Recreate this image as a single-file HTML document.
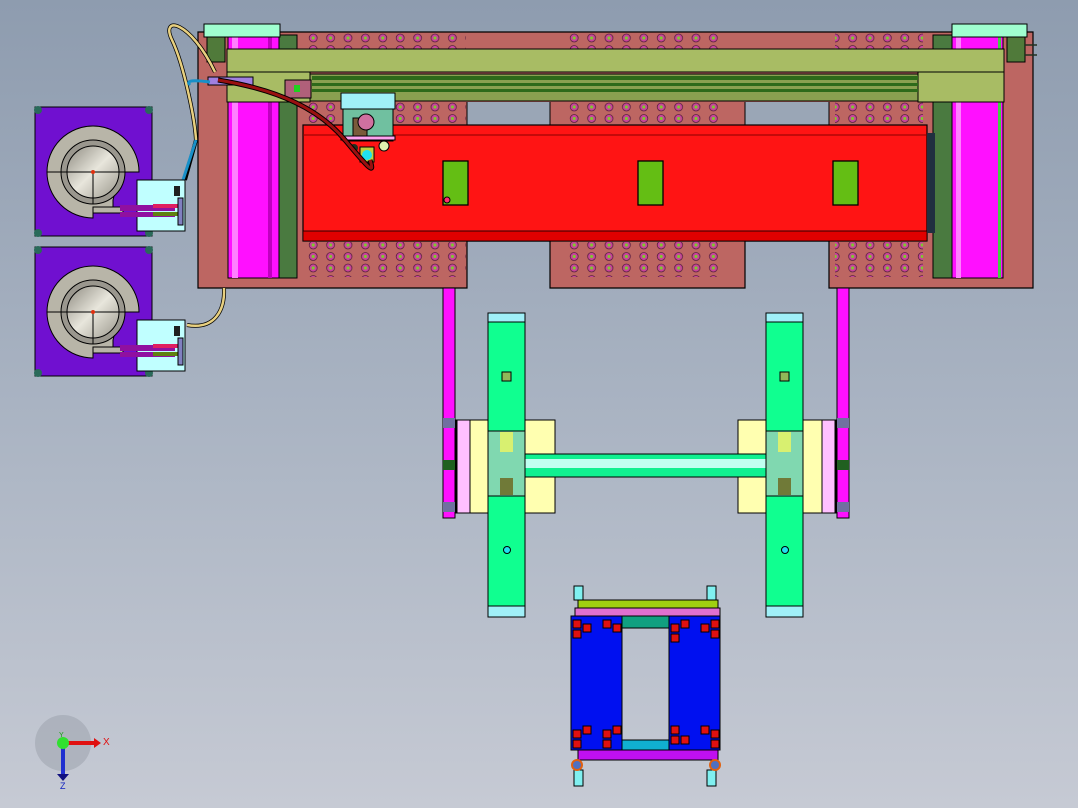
<!DOCTYPE html>
<html><head><meta charset="utf-8"><style>
html,body{margin:0;padding:0;width:1078px;height:808px;overflow:hidden}
body{background:linear-gradient(#8e9caf,#a9b3c2 50%,#c6cad4)}
svg{position:absolute;left:0;top:0}
</style></head><body>
<svg width="1078" height="808" viewBox="0 0 1078 808" xmlns="http://www.w3.org/2000/svg" font-family="Liberation Sans, sans-serif">
<defs>
<pattern id="h" x="304.5" y="32" width="17.4" height="11.5" patternUnits="userSpaceOnUse">
<circle cx="8.7" cy="6" r="4" fill="#c8449a" stroke="#5a2040" stroke-width="0.8"/>
<circle cx="8.7" cy="6" r="1.6" fill="#7fc830"/>
</pattern>
<linearGradient id="disc" x1="0" y1="0" x2="1" y2="1"><stop offset="0" stop-color="#8d8a80"/><stop offset=".5" stop-color="#e8e6dc"/><stop offset="1" stop-color="#9a978c"/></linearGradient>
</defs>

<path d="M198 32H1033V288H829V241H745V288H550V241H467V288H198Z" fill="#bd6662" stroke="#000" stroke-width="1.2"/>
<rect x="467" y="102" width="83" height="23" fill="#9aa6b6"/>
<rect x="745" y="102" width="84" height="23" fill="#9aa6b6"/>
<line x1="467" y1="102" x2="467" y2="125" stroke="#000"/><line x1="550" y1="102" x2="550" y2="125" stroke="#000"/>
<line x1="745" y1="102" x2="745" y2="125" stroke="#000"/><line x1="829" y1="102" x2="829" y2="125" stroke="#000"/>
<rect x="304" y="32" width="162" height="24" fill="url(#h)"/>
<rect x="565" y="32" width="158" height="24" fill="url(#h)"/>
<rect x="835" y="32" width="88" height="24" fill="url(#h)"/>
<rect x="304" y="100" width="162" height="25" fill="url(#h)"/>
<rect x="565" y="100" width="158" height="25" fill="url(#h)"/>
<rect x="835" y="100" width="88" height="25" fill="url(#h)"/>
<rect x="304" y="242" width="162" height="35" fill="url(#h)"/>
<rect x="565" y="242" width="158" height="35" fill="url(#h)"/>
<rect x="835" y="242" width="88" height="35" fill="url(#h)"/>

<rect x="279" y="35" width="18" height="243" fill="#4a7a40" stroke="#000"/>
<rect x="228" y="35" width="51" height="243" fill="#ff10ff" stroke="#000"/>
<rect x="232" y="35" width="6" height="243" fill="#ff80ff"/>
<rect x="268" y="35" width="4" height="243" fill="#c000c0"/>
<rect x="204" y="24" width="76" height="13" fill="#a0ffd0" stroke="#000"/>
<rect x="207" y="37" width="18" height="25" fill="#507a3a" stroke="#000"/>
<rect x="933" y="35" width="19" height="243" fill="#4a7a40" stroke="#000"/>
<rect x="952" y="35" width="51" height="243" fill="#ff10ff" stroke="#000"/>
<rect x="956" y="35" width="5" height="243" fill="#ff80ff"/>
<rect x="998" y="35" width="3" height="243" fill="#40d040"/>
<rect x="952" y="24" width="75" height="13" fill="#a0ffd0" stroke="#000"/>
<rect x="1007" y="37" width="18" height="25" fill="#507a3a" stroke="#000"/>
<path d="M1025 45h12M1025 55h12" stroke="#203020" stroke-width="1.5"/>

<rect x="227" y="49" width="777" height="23" fill="#a8bc64" stroke="#000"/>
<rect x="227" y="72" width="83" height="30" fill="#a8bc64" stroke="#000"/>
<rect x="918" y="72" width="86" height="30" fill="#a8bc64" stroke="#000"/>
<rect x="310" y="74" width="608" height="27" fill="#8aa050" stroke="#000"/>
<rect x="312" y="76" width="606" height="4" fill="#2e6a1a"/>
<rect x="312" y="83" width="606" height="3" fill="#2e6a1a"/>
<rect x="312" y="89" width="606" height="3" fill="#2e6a1a"/>
<rect x="285" y="80" width="26" height="18" fill="#b0607a" stroke="#000"/>
<rect x="294" y="85" width="6" height="7" fill="#20d020"/>
<rect x="208" y="77" width="45" height="8" fill="#a080e0" stroke="#000"/>

<rect x="303" y="125" width="624" height="116" fill="#ff1414" stroke="#000" stroke-width="1.2"/>
<line x1="303" y1="135" x2="927" y2="135" stroke="#800"/>
<rect x="303" y="231" width="624" height="10" fill="#e00000" stroke="#000" stroke-width="0.8"/>
<rect x="927" y="133" width="8" height="100" fill="#203040"/>
<rect x="443" y="161" width="25" height="44" fill="#64be14" stroke="#000" stroke-width="1.3"/>
<rect x="638" y="161" width="25" height="44" fill="#64be14" stroke="#000" stroke-width="1.3"/>
<rect x="833" y="161" width="25" height="44" fill="#64be14" stroke="#000" stroke-width="1.3"/>
<circle cx="447" cy="200" r="3" fill="#ff3070" stroke="#000"/>

<rect x="341" y="93" width="54" height="16" fill="#a0f0f8" stroke="#000"/>
<rect x="343" y="109" width="50" height="32" fill="#70c0a0" stroke="#000"/>
<rect x="353" y="118" width="14" height="20" fill="#7a5a3a" stroke="#000"/>
<circle cx="366" cy="122" r="8" fill="#d070a0" stroke="#000"/>
<rect x="341" y="136" width="54" height="4" fill="#ffa0f0" stroke="#000"/>
<rect x="360" y="147" width="14" height="15" fill="#c0d040" stroke="#000"/>
<circle cx="367" cy="155" r="5" fill="#20e0f0"/>
<circle cx="354" cy="148" r="4" fill="#203020"/>
<circle cx="384" cy="146" r="5" fill="#e0f0b0" stroke="#000"/>

<path d="M218 80C280 90 320 110 345 140S375 175 370 160" stroke="#000" stroke-width="5" fill="none"/>
<path d="M218 80C280 90 320 110 345 140S375 175 370 160" stroke="#9a1010" stroke-width="3" fill="none"/>
<path d="M215 72C190 20 160 15 172 40S195 120 196 140L185 180" stroke="#000" stroke-width="4" fill="none"/>
<path d="M215 72C190 20 160 15 172 40S195 120 196 140" stroke="#e8d080" stroke-width="2.5" fill="none"/>
<path d="M196 140L183 180" stroke="#1890c8" stroke-width="3" fill="none"/>
<path d="M210 82C195 80 185 80 190 85" stroke="#1890c8" stroke-width="3" fill="none"/>
<path d="M187 325C215 330 225 310 224 288" stroke="#000" stroke-width="4" fill="none"/>
<path d="M187 325C215 330 225 310 224 288" stroke="#e8d080" stroke-width="2.5" fill="none"/>

<g id="m">
<rect x="35" y="107" width="117" height="129" fill="#7010d0" stroke="#000"/>
<circle cx="38" cy="110" r="4" fill="#2a6a5a"/><circle cx="149" cy="110" r="4" fill="#2a6a5a"/>
<circle cx="38" cy="233" r="4" fill="#2a6a5a"/><circle cx="149" cy="233" r="4" fill="#2a6a5a"/>
<path d="M93 126A46 46 0 0 1 139 172L120 172L113 200L113 213L93 213L93 218A46 46 0 1 1 93 126Z" fill="#b8b5a8" stroke="#000"/>
<circle cx="93" cy="172" r="32" fill="#9a978e" stroke="#000"/>
<circle cx="93" cy="172" r="26" fill="url(#disc)" stroke="#000"/>
<path d="M47 172H125M93 172V204" stroke="#000"/>
<circle cx="93" cy="172" r="2" fill="#e03010"/>
<rect x="93" y="207" width="30" height="6" fill="#b8b5a8" stroke="#000"/>
<rect x="137" y="180" width="48" height="51" fill="#c0ffff" stroke="#000"/>
<rect x="120" y="205" width="55" height="6" fill="#9010a0"/>
<rect x="120" y="212" width="55" height="5" fill="#9010a0"/>
<rect x="153" y="204" width="25" height="4" fill="#e02060"/>
<rect x="153" y="212" width="25" height="4" fill="#608010"/>
<rect x="178" y="198" width="5" height="27" fill="#8080c0" stroke="#000"/>
<rect x="174" y="186" width="6" height="10" fill="#202020"/>
</g>
<use href="#m" y="140"/>

<rect x="443" y="288" width="12" height="230" fill="#ff10ff" stroke="#000"/>
<rect x="837" y="288" width="12" height="230" fill="#ff10ff" stroke="#000"/>
<rect x="456" y="420" width="99" height="93" fill="#ffffb0" stroke="#000"/>
<rect x="738" y="420" width="98" height="93" fill="#ffffb0" stroke="#000"/>
<rect x="457" y="420" width="13" height="93" fill="#ffc0ff" stroke="#000"/>
<rect x="822" y="420" width="13" height="93" fill="#ffc0ff" stroke="#000"/>
<rect x="443" y="418" width="12" height="10" fill="#7070a0"/><rect x="443" y="460" width="12" height="10" fill="#206020"/><rect x="443" y="502" width="12" height="10" fill="#7070a0"/>
<rect x="837" y="418" width="12" height="10" fill="#7070a0"/><rect x="837" y="460" width="12" height="10" fill="#206020"/><rect x="837" y="502" width="12" height="10" fill="#7070a0"/>
<rect x="525" y="454" width="241" height="23" fill="#10f090" stroke="#000"/>
<rect x="525" y="459" width="241" height="9" fill="#c0fff0"/>
<rect x="488" y="431" width="37" height="65" fill="#80d8b0" stroke="#000"/>
<rect x="766" y="431" width="37" height="65" fill="#80d8b0" stroke="#000"/>
<rect x="500" y="432" width="13" height="20" fill="#d8f070"/><rect x="500" y="478" width="13" height="17" fill="#707a38"/>
<rect x="778" y="432" width="13" height="20" fill="#d8f070"/><rect x="778" y="478" width="13" height="17" fill="#707a38"/>
<g id="col">
<rect x="488" y="313" width="37" height="10" fill="#a0f0f8" stroke="#000"/>
<rect x="488" y="322" width="37" height="109" fill="#10ff90" stroke="#000"/>
<rect x="488" y="496" width="37" height="110" fill="#10ff90" stroke="#000"/>
<rect x="488" y="606" width="37" height="11" fill="#a0f0f8" stroke="#000"/>
<rect x="502" y="372" width="9" height="9" fill="#90b858" stroke="#000"/>
<circle cx="507" cy="550" r="3.5" fill="#20e0f0" stroke="#000"/>
</g>
<use href="#col" x="278"/>

<rect x="578" y="600" width="140" height="8" fill="#a0d010" stroke="#000"/>
<rect x="575" y="608" width="145" height="8" fill="#e070d0" stroke="#000"/>
<rect x="622" y="616" width="47" height="12" fill="#10a080" stroke="#000"/>
<rect x="622" y="740" width="47" height="10" fill="#10b0d0" stroke="#000"/>
<rect x="571" y="616" width="51" height="134" fill="#0010f0" stroke="#000"/>
<rect x="669" y="616" width="51" height="134" fill="#0010f0" stroke="#000"/>
<rect x="578" y="750" width="140" height="10" fill="#c010f0" stroke="#000"/>
<g fill="#e01010" stroke="#000" stroke-width="1">
<rect x="573" y="620" width="8" height="8"/><rect x="583" y="624" width="8" height="8"/><rect x="573" y="630" width="8" height="8"/><rect x="603" y="620" width="8" height="8"/><rect x="613" y="624" width="8" height="8"/>
<rect x="671" y="624" width="8" height="8"/><rect x="681" y="620" width="8" height="8"/><rect x="701" y="624" width="8" height="8"/><rect x="711" y="620" width="8" height="8"/><rect x="711" y="630" width="8" height="8"/><rect x="671" y="634" width="8" height="8"/>
<rect x="573" y="730" width="8" height="8"/><rect x="583" y="726" width="8" height="8"/><rect x="573" y="740" width="8" height="8"/><rect x="603" y="730" width="8" height="8"/><rect x="613" y="726" width="8" height="8"/><rect x="603" y="740" width="8" height="8"/>
<rect x="671" y="726" width="8" height="8"/><rect x="681" y="736" width="8" height="8"/><rect x="701" y="726" width="8" height="8"/><rect x="711" y="730" width="8" height="8"/><rect x="711" y="740" width="8" height="8"/><rect x="671" y="736" width="8" height="8"/>
</g>
<g fill="#80f0f0" stroke="#000">
<rect x="574" y="586" width="9" height="14"/><rect x="707" y="586" width="9" height="14"/>
<rect x="574" y="770" width="9" height="16"/><rect x="707" y="770" width="9" height="16"/>
</g>
<circle cx="577" cy="765" r="5" fill="#5070c0" stroke="#e06010" stroke-width="2"/>
<circle cx="715" cy="765" r="5" fill="#5070c0" stroke="#e06010" stroke-width="2"/>

<circle cx="63" cy="743" r="28" fill="#9aa0aa" opacity=".5"/>
<line x1="63" y1="743" x2="95" y2="743" stroke="#e01010" stroke-width="4"/>
<polygon points="94,738 101,743 94,748" fill="#e01010"/>
<line x1="63" y1="743" x2="63" y2="775" stroke="#2030d0" stroke-width="4"/>
<polygon points="57,774 69,774 63,781" fill="#101080"/>
<circle cx="63" cy="743" r="6" fill="#30e030"/>
<text x="103" y="745" font-size="10" fill="#e01010">X</text>
<text x="60" y="789" font-size="9" fill="#1020c0">Z</text>
<text x="59" y="737" font-size="7" fill="#10a010">Y</text>
</svg>
</body></html>
